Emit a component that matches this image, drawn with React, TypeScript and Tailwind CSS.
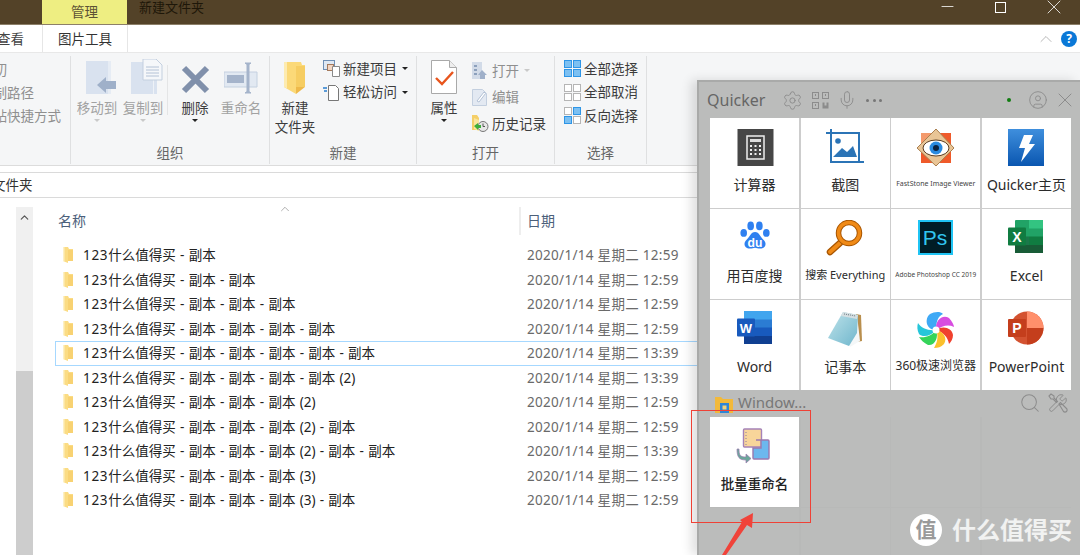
import type { ReactNode } from "react";
import { Settings, Mic, CircleUser, X, Search, Wrench, ChevronUp, Minus } from "lucide-react";

const rows = [
  { name: "什么值得买 - 副本", time: "12:59" },
  { name: "什么值得买 - 副本 - 副本", time: "12:59" },
  { name: "什么值得买 - 副本 - 副本 - 副本", time: "12:59" },
  { name: "什么值得买 - 副本 - 副本 - 副本 - 副本", time: "12:59" },
  { name: "什么值得买 - 副本 - 副本 - 副本 - 副本 - 副本", time: "13:39", selected: true },
  { name: "什么值得买 - 副本 - 副本 - 副本 - 副本 (2)", time: "13:39" },
  { name: "什么值得买 - 副本 - 副本 - 副本 (2)", time: "12:59" },
  { name: "什么值得买 - 副本 - 副本 - 副本 (2) - 副本", time: "12:59" },
  { name: "什么值得买 - 副本 - 副本 - 副本 (2) - 副本 - 副本", time: "13:39" },
  { name: "什么值得买 - 副本 - 副本 - 副本 (3)", time: "12:59" },
  { name: "什么值得买 - 副本 - 副本 - 副本 (3) - 副本", time: "12:59" },
];

function FolderSmall() {
  return (
    <svg width="13" height="16" viewBox="0 0 13 16" className="shrink-0">
      <path d="M1 0h5l1 2h4v12H6v2l-5-2z" fill="#fbdc84" />
      <path d="M1 0h1.500v14.500L1 14z" fill="#fdf0c4" />
      <path d="M6 3h5v11H6z" fill="#f8d272" />
    </svg>
  );
}

function MoveIcon() {
  return (
    <svg width="38" height="33" viewBox="-8 0 38 33">
      <path d="M0 0h25v33H0z" fill="#d9e2ef" />
      <path d="M22 0h3v33h-3z" fill="#e6ecf4" />
      <path d="M11 24l9-8v4h10v8H20v4z" fill="#9fb0c9" />
    </svg>
  );
}

function CopyIcon() {
  return (
    <svg width="39" height="35" viewBox="-7 0 39 35">
      <path d="M0 3h26v32H0z" fill="#d9e2ef" />
      <path d="M22 3h1v32h-1z" fill="#eef2f7" />
      <path d="M12 0h13l6 6v15H12z" fill="#f5f7fa" stroke="#c3cfdf" />
      <path d="M15 8h13M15 11h13M15 14h13M15 17h13" stroke="#b4c2d6" />
    </svg>
  );
}

function RenameIcon() {
  return (
    <svg width="34" height="32" viewBox="0 0 34 32">
      <path d="M0 10h33v15H0z" fill="#e2e9f2" stroke="#c4d0e0" />
      <path d="M3 13h17v8H3z" fill="#a5b4cb" />
      <path d="M21 1h6l-2 1.500v27l2 1.500h-6l2-1.500v-27z" fill="#a5b4cb" stroke="#a5b4cb" />
    </svg>
  );
}

function BigFolder() {
  return (
    <svg width="22" height="32" viewBox="0 0 22 32">
      <path d="M0 0h17l1 3h3v22h-9v7L0 25z" fill="#fbd978" />
      <path d="M0 0h3v26.500L0 25z" fill="#fdebb0" />
      <path d="M12 4h9v21h-9z" fill="#f6cd62" />
      <path d="M12 25h9l-9 7z" fill="#eeb94a" />
    </svg>
  );
}

function PropsIcon() {
  return (
    <svg width="26" height="34" viewBox="0 0 26 34">
      <path d="M.5.5h18l7 7v26H.5z" fill="#fff" stroke="#a9a9a9" />
      <path d="M18.500.5v7h7" fill="#eee" stroke="#a9a9a9" />
      <path d="M5 18l6 6 11-12" fill="none" stroke="#e8551d" strokeWidth="2.400" />
    </svg>
  );
}

function NewItemIcon() {
  return (
    <svg width="17" height="17" viewBox="0 0 17 17">
      <rect x=".5" y=".5" width="11" height="9" fill="#dfe8f3" stroke="#6f8fb5" />
      <rect x="4.500" y="4.500" width="6" height="6" fill="#f3d6c3" stroke="#a57a5d" />
      <path d="M9.500 6.500h7v10h-7z" fill="#fff" stroke="#8a8a8a" />
    </svg>
  );
}

function EasyAccessIcon() {
  return (
    <svg width="17" height="17" viewBox="0 0 17 17">
      <path d="M5.500 1.500h7l3 3v12h-10z" fill="#fff" stroke="#777" />
      <path d="M0 4h4M1 7h3" stroke="#2a7fd0" strokeWidth="1.300" />
    </svg>
  );
}

function OpenIcon() {
  return (
    <svg width="15" height="17" viewBox="0 0 15 17">
      <path d="M0 0h10v17H0z" fill="#d2dbe8" />
      <path d="M2 3h3v2H2zM2 7h3v2H2zM2 11h3v2H2z" fill="#8ca0bc" />
      <path d="M10 8l5 5h-2v4H8v-4H6z" fill="#9fb0c9" />
    </svg>
  );
}

function EditIcon() {
  return (
    <svg width="15" height="17" viewBox="0 0 15 17">
      <path d="M.5.5h10l4 4v12H.5z" fill="#e3e9f2" stroke="#c3cfdf" />
      <path d="M5 12l7-9 1.500 1.500L7 13z" fill="#fff" stroke="#b4c2d6" />
    </svg>
  );
}

function HistoryIcon() {
  return (
    <svg width="17" height="17" viewBox="0 0 17 17">
      <path d="M0 0h5l2 3v12H0z" fill="#f5cf68" />
      <path d="M2 3l5 2v11l-5-2z" fill="#fbe59c" />
      <circle cx="11" cy="11.500" r="5" fill="#e6e6e6" stroke="#777" />
      <path d="M11 8.500v3h2" fill="none" stroke="#555" />
      <path d="M2 11l4-3v2h3v3H6v2z" fill="#3fae3a" />
    </svg>
  );
}

function SelectIcon({ kind }: { kind: "all" | "none" | "invert" }) {
  const on = kind === "all" ? [1, 1, 1, 1] : kind === "none" ? [0, 0, 0, 0] : [0, 1, 1, 0];
  const spots = [
    [0, 0],
    [9, 0],
    [0, 9],
    [9, 9],
  ];
  return (
    <svg width="17" height="17" viewBox="0 0 17 17">
      {spots.map(([x, y], i) => (
        <rect
          key={i}
          x={x + 0.5}
          y={y + 0.5}
          width="7"
          height="7"
          fill={on[i] ? "#7cc0f2" : "#fff"}
          stroke={on[i] ? "#2e95e6" : "#b5b5b5"}
        />
      ))}
    </svg>
  );
}

function Caret({ light }: { light?: boolean }) {
  return (
    <span
      className={`inline-block h-0 w-0 border-x-[3.5px] border-t-[3.5px] border-x-transparent ${
        light ? "border-t-[#c9c9c9]" : "border-t-[#222]"
      }`}
    />
  );
}

function BigButton({
  icon,
  label,
  width,
  muted,
  caret,
}: {
  icon: ReactNode;
  label: ReactNode;
  width: number;
  muted?: boolean;
  caret?: "dark" | "light";
}) {
  return (
    <div className="flex flex-col items-center" style={{ width }}>
      <div className="flex h-[37px] items-end justify-center pb-[2px]">{icon}</div>
      <div className={`mt-[3px] text-center text-[13.5px] leading-[19px] ${muted ? "text-[#a2a2a2]" : "text-[#3c3c3c]"}`}>
        {label}
      </div>
      {caret && (
        <div className="-mt-[1px] flex h-[6px] items-center">
          <Caret light={caret === "light"} />
        </div>
      )}
    </div>
  );
}

function SmallRow({
  icon,
  label,
  muted,
  caret,
  tall,
}: {
  icon: ReactNode;
  label: string;
  muted?: boolean;
  caret?: "dark" | "light";
  tall?: boolean;
}) {
  return (
    <div className={`flex items-center ${tall ? "h-[26.500px]" : "h-[23.500px]"}`}>
      <div className="flex w-[20px] shrink-0 items-center">{icon}</div>
      <span className={`whitespace-nowrap text-[13.5px] ${muted ? "text-[#8f8f8f]" : "text-[#3c3c3c]"}`}>{label}</span>
      {caret && (
        <span className="ml-[5px] flex items-center">
          <Caret light={caret === "light"} />
        </span>
      )}
    </div>
  );
}

function Group({ width, label, children }: { width: number; label?: string; children: ReactNode }) {
  return (
    <div className="flex h-[108px] shrink-0 flex-col border-r border-[#dfe0e1]" style={{ width }}>
      <div className="h-[85px] flex-none">{children}</div>
      <div className="flex-1 text-center text-[13.5px] leading-[24px] text-[#666]">{label}</div>
    </div>
  );
}

function Ribbon() {
  return (
    <div className="flex h-[114px] border-y border-[#dcdcdc] border-t-[#e8e8e8] bg-[#f5f6f7] pt-[3px]">
      <Group width={71}>
        <div className="-ml-[20px] pt-[3px] text-[13.5px] text-[#8f8f8f]">
          <div className="flex h-[23px] items-center whitespace-nowrap">剪切</div>
          <div className="flex h-[23px] items-center whitespace-nowrap">复制路径</div>
          <div className="flex h-[23px] items-center whitespace-nowrap">粘贴快捷方式</div>
        </div>
      </Group>
      <Group width={199} label="组织">
        <div className="flex pl-[3px] pt-[3px]">
          <BigButton icon={<MoveIcon />} label="移动到" width={46} muted caret="light" />
          <BigButton icon={<CopyIcon />} label="复制到" width={46} muted caret="light" />
          <div className="ml-[1px] mr-[4px] mt-[6px] h-[50px] w-px bg-[#e4e5e6]" />
          <BigButton
            icon={
              <svg width="29" height="29" viewBox="0 0 29 29">
                <path d="M3 3l23 23M26 3L3 26" stroke="#8090ab" strokeWidth="6" />
              </svg>
            }
            label="删除"
            width={46}
            caret="dark"
          />
          <BigButton icon={<RenameIcon />} label="重命名" width={46} muted />
        </div>
      </Group>
      <Group width={147} label="新建">
        <div className="flex pl-[3px] pt-[1px]">
          <div className="pt-[2px]">
            <BigButton icon={<BigFolder />} label={<>新建<br />文件夹</>} width={44} />
          </div>
          <div className="ml-[6px]">
            <SmallRow icon={<NewItemIcon />} label="新建项目" caret="dark" />
            <SmallRow icon={<EasyAccessIcon />} label="轻松访问" caret="dark" />
          </div>
        </div>
      </Group>
      <Group width={138} label="打开">
        <div className="flex pl-[5px] pt-[1.500px]">
          <div className="pt-[1.500px]">
            <BigButton icon={<PropsIcon />} label="属性" width={44} caret="dark" />
          </div>
          <div className="ml-[6px]">
            <SmallRow icon={<OpenIcon />} label="打开" muted caret="light" tall />
            <SmallRow icon={<EditIcon />} label="编辑" muted tall />
            <SmallRow icon={<HistoryIcon />} label="历史记录" tall />
          </div>
        </div>
      </Group>
      <Group width={92} label="选择">
        <div className="pl-[9px] pt-[1px]">
          <SmallRow icon={<SelectIcon kind="all" />} label="全部选择" />
          <SmallRow icon={<SelectIcon kind="none" />} label="全部取消" />
          <SmallRow icon={<SelectIcon kind="invert" />} label="反向选择" />
        </div>
      </Group>
    </div>
  );
}

const Frame = ({ children }: { children: ReactNode }) => (
  <svg width="38" height="38" viewBox="0 0 38 38">
    {children}
  </svg>
);

const appIcons: Record<string, ReactNode> = {
  calc: (
    <Frame>
      <rect x="1.500" width="36" height="37" fill="#464646" />
      <rect x="11" y="7" width="17" height="23" fill="#464646" stroke="#eee" strokeWidth="1.500" />
      <rect x="14" y="10" width="11" height="3" fill="#ddd" />
      <path d="M14 17h2M18.500 17h2M23 17h2M14 21h2M18.500 21h2M23 21h2M14 25h2M18.500 25h2M23 25h2" stroke="#eee" strokeWidth="2" />
    </Frame>
  ),
  shot: (
    <Frame>
      <path d="M0 4h33v29M5 0v33h33" fill="none" stroke="#2b74b6" strokeWidth="2" />
      <path d="M7 28l9-9 5 4 6-6 4 11H7z" fill="#2b74b6" />
      <circle cx="12" cy="12" r="2.800" fill="#2b74b6" />
    </Frame>
  ),
  fast: (
    <Frame>
      <rect x="4" y="4" width="30" height="30" fill="#ef5a2a" />
      <rect x="4" y="4" width="15" height="15" fill="#f49a6c" />
      <path d="M19 0l18 19-18 18L0 19z" fill="#e9c596" stroke="#a97f50" />
      <ellipse cx="19" cy="19" rx="13" ry="8" fill="#fff" stroke="#5a3d22" />
      <circle cx="19" cy="19" r="6.500" fill="#2a8ae0" />
      <circle cx="19" cy="19" r="3" fill="#0d2340" />
    </Frame>
  ),
  quicker: (
    <Frame>
      <defs>
        <linearGradient id="qk" x1="0" y1="0" x2="0" y2="1">
          <stop offset="0" stopColor="#3f8fdd" />
          <stop offset="1" stopColor="#0a56b0" />
        </linearGradient>
      </defs>
      <rect x="1" width="36" height="37" fill="url(#qk)" />
      <path d="M17 6h9l-4 9h6L14 33l4-14h-6z" fill="#fff" />
    </Frame>
  ),
  baidu: (
    <Frame>
      <g transform="translate(2.500 -1) scale(.87)">
        <ellipse cx="6" cy="16" rx="3.800" ry="4.500" fill="#2f80f0" />
        <ellipse cx="14" cy="8" rx="3.800" ry="5" fill="#2f80f0" />
        <ellipse cx="24" cy="8" rx="3.800" ry="5" fill="#2f80f0" />
        <ellipse cx="32" cy="16" rx="3.800" ry="4.500" fill="#2f80f0" />
        <path d="M19 15c5 0 6 6 10 9 4 4 2 10-4 10-3 0-4-1-6-1s-3 1-6 1c-6 0-8-6-4-10 4-3 5-9 10-9z" fill="#2f80f0" />
        <text x="19" y="32" textAnchor="middle" fontSize="14" fontWeight="700" fill="#fff" fontFamily="'Liberation Sans',sans-serif">du</text>
      </g>
    </Frame>
  ),
  everything: (
    <Frame>
      <path d="M14 23L4 32" stroke="#a85500" strokeWidth="6.500" strokeLinecap="round" />
      <path d="M14 23L4 32" stroke="#f08a16" strokeWidth="4" strokeLinecap="round" />
      <circle cx="23" cy="13" r="10.500" fill="#fff" stroke="#a85500" strokeWidth="5.500" />
      <circle cx="23" cy="13" r="10.500" fill="none" stroke="#f08a16" strokeWidth="3.500" />
    </Frame>
  ),
  ps: (
    <Frame>
      <rect x="2" y="1" width="33" height="33" fill="#001d26" stroke="#1fc4f4" strokeWidth="2" />
      <text x="18" y="25" textAnchor="middle" fontSize="21" fill="#31c5f0" fontFamily="'Liberation Sans',sans-serif">Ps</text>
    </Frame>
  ),
  excel: (
    <Frame>
      <rect x="8" width="28" height="33" rx="1" fill="#21a366" />
      <rect x="22" width="14" height="8.500" fill="#33c481" />
      <rect x="22" y="16.500" width="14" height="8.500" fill="#107c41" />
      <rect x="8" y="16.500" width="14" height="8.500" fill="#185c37" opacity=".6" />
      <rect x="8" y="25" width="28" height="8" fill="#185c37" />
      <rect x="1" y="7.500" width="18" height="18" rx="1" fill="#107c41" />
      <text x="10" y="22" textAnchor="middle" fontSize="14" fontWeight="700" fill="#fff" fontFamily="'Liberation Sans',sans-serif">X</text>
    </Frame>
  ),
  word: (
    <Frame>
      <rect x="8" width="28" height="33" rx="1" fill="#2b7cd3" />
      <rect x="8" width="28" height="8.500" fill="#41a5ee" />
      <rect x="8" y="16.500" width="28" height="8.500" fill="#185abd" />
      <rect x="8" y="25" width="28" height="8" fill="#103f91" />
      <rect x="1" y="7.500" width="18" height="18" rx="1" fill="#185abd" />
      <text x="10" y="22" textAnchor="middle" fontSize="13" fontWeight="700" fill="#fff" fontFamily="'Liberation Sans',sans-serif">W</text>
    </Frame>
  ),
  notepad: (
    <Frame>
      <defs>
        <linearGradient id="np" x1="0" y1="0" x2="1" y2="1">
          <stop offset="0" stopColor="#bfe3ea" />
          <stop offset="1" stopColor="#6fb6cc" />
        </linearGradient>
      </defs>
      <path d="M30 3l5 1 1 26-5 1z" fill="#b98f4e" />
      <path d="M18 4h13l3 26-10 6z" fill="#f4f7f8" />
      <path d="M17 1l15 3-1 18-8 13L2 27z" fill="url(#np)" />
      <path d="M17 1l15 3-1 4-16-3z" fill="#d5dfe2" />
      <path d="M18 3l12 2" stroke="#7d8a90" strokeWidth="1.200" strokeDasharray="1 1" />
    </Frame>
  ),
  browser: (
    <Frame>
      <path d="M19 19C9 19 7 8 13 3c4-2 10-3 13 0-5 2-7 8-7 16z" fill="#3fa9f5" />
      <path d="M19 19c-1-9 6-16 13-12 3 3 5 7 5 9-6-3-12-1-18 3z" fill="#d84de0" />
      <path d="M19 19c7-5 16-2 17 5 0 4-2 7-4 9-1-7-6-12-13-14z" fill="#f0412e" />
      <path d="M19 19c7 1 12 8 8 14-3 3-6 4-10 4 3-5 5-11 2-18z" fill="#fbc02d" />
      <path d="M19 19c3 7-1 16-8 15-4-2-7-5-9-8 6 1 13-1 17-7z" fill="#35d45a" />
      <path d="M19 19c-5 6-13 8-17 4-2-4-2-8-1-11 3 5 10 8 18 7z" fill="#26c6da" />
      <circle cx="19" cy="19" r="3.500" fill="#fff" />
    </Frame>
  ),
  ppt: (
    <Frame>
      <circle cx="20" cy="17" r="16.500" fill="#d35230" />
      <path d="M20 .5a16.500 16.500 0 0 1 16.500 16.500H20z" fill="#ff8f6b" />
      <path d="M20 17h16.500A16.500 16.500 0 0 1 20 33.500z" fill="#c43e1c" />
      <rect x="1" y="8" width="18" height="18" rx="1" fill="#c43e1c" />
      <text x="10" y="22" textAnchor="middle" fontSize="14" fontWeight="700" fill="#fff" fontFamily="'Liberation Sans',sans-serif">P</text>
    </Frame>
  ),
};

const apps = [
  { icon: "calc", label: "计算器", size: "text-[14px]" },
  { icon: "shot", label: "截图", size: "text-[14px]" },
  { icon: "fast", label: "FastStone Image Viewer", size: "text-[7px] text-[#444]" },
  { icon: "quicker", label: "Quicker主页", size: "text-[14px]" },
  { icon: "baidu", label: "用百度搜", size: "text-[14px]" },
  { icon: "everything", label: "搜索 Everything", size: "text-[11px]" },
  { icon: "ps", label: "Adobe Photoshop CC 2019", size: "text-[6.500px] text-[#444]" },
  { icon: "excel", label: "Excel", size: "text-[14px]" },
  { icon: "word", label: "Word", size: "text-[14px]" },
  { icon: "notepad", label: "记事本", size: "text-[14px]" },
  { icon: "browser", label: "360极速浏览器", size: "text-[12px]" },
  { icon: "ppt", label: "PowerPoint", size: "text-[14px]" },
];

function AppCell({ icon, label, size }: { icon: ReactNode; label: string; size: string }) {
  return (
    <div className="flex flex-col items-center bg-white pt-[11px] text-[#2b2b2b]">
      <div className="h-[38px]">{icon}</div>
      <div className={`mt-[6px] flex h-[22px] items-center whitespace-nowrap ${size}`}>{label}</div>
    </div>
  );
}

function QrIcon() {
  return (
    <svg width="17" height="17" viewBox="0 0 17 17" fill="none" stroke="#8c8c8c">
      <rect x=".5" y=".5" width="6" height="6" />
      <rect x="10.500" y=".5" width="6" height="6" />
      <rect x=".5" y="10.500" width="6" height="6" />
      <path d="M3 3h1M13 3h1M3 13h1" strokeWidth="2" />
      <path d="M10.500 10.500h2v3h2v-3h2v6h-6z" fill="#8c8c8c" stroke="none" />
    </svg>
  );
}

function ToolsIcon() {
  return (
    <span className="relative block h-[20px] w-[20px]">
      <Wrench size={20} strokeWidth={1.200} className="absolute" />
      <svg width="20" height="20" viewBox="0 0 20 20" fill="none" stroke="currentColor" strokeWidth="1.100" className="absolute">
        <path d="M1 3l2-2 3 2v2l3.500 3.500-1 1L5 6H3zM11 11l1.500-1.500 6 6a1.500 1.500 0 0 1-3 3z" />
      </svg>
    </span>
  );
}

function QuickerPanel() {
  return (
    <div className="absolute bottom-0 left-[697px] right-0 top-[80px] border-l-2 border-t-2 border-[#a9aaa9] bg-[#bbbcbb] pl-[11px] shadow-[-6px_0_10px_rgba(0,0,0,0.12)]">
      <div className="flex h-[36px] items-center text-[#8c8c8c]">
        <span className="ml-[-3px] w-[75px] text-[16px] text-[#666]">Quicker</span>
        <Settings size={21} strokeWidth={1.100} />
        <span className="ml-[9px]">
          <QrIcon />
        </span>
        <Mic size={20} strokeWidth={1.100} className="ml-[8px]" />
        <span className="ml-[9px] flex gap-[3.500px]">
          <i className="block h-[3px] w-[3px] rounded-full bg-[#777]" />
          <i className="block h-[3px] w-[3px] rounded-full bg-[#777]" />
          <i className="block h-[3px] w-[3px] rounded-full bg-[#777]" />
        </span>
        <i className="ml-[125px] block h-[4px] w-[4px] rounded-full bg-[#107c10]" />
        <CircleUser size={20} strokeWidth={1.100} className="ml-[17px]" />
        <X size={24} strokeWidth={1} className="ml-[5px]" />
      </div>
      <div className="grid w-[361px] grid-cols-4 grid-rows-[repeat(3,89.500px)] gap-[1.500px] bg-[#cdcdcd]">
        {apps.map((a) => (
          <AppCell key={a.icon} icon={appIcons[a.icon]} label={a.label} size={a.size} />
        ))}
      </div>
      <div className="flex h-[27px] items-center text-[#8c8c8c]">
        <svg width="18" height="16" viewBox="0 0 18 16" className="ml-[5px] mt-[4px] shrink-0">
          <path d="M0 0h6l2 2h10v14H0z" fill="#f2b93a" />
          <rect x="5" y="6" width="9" height="10" fill="#2f86d6" />
          <rect x="7.500" y="8.500" width="4" height="4" fill="#f2d27a" />
        </svg>
        <span className="ml-[5px] -mt-[1px] text-[15px] text-[#777]">Window...</span>
        <Search size={22} strokeWidth={1.100} className="ml-[213px]" />
        <span className="ml-[7px]">
          <ToolsIcon />
        </span>
      </div>
      <div className="grid w-[361px] grid-cols-4 grid-rows-[repeat(2,90px)] gap-[1.500px] bg-[#b8b9b8]">
        <div className="flex flex-col items-center bg-white pt-[11px] text-[#222]">
          <svg width="38" height="38" viewBox="0 0 38 38">
            <rect x="7.500" y="1" width="18" height="18" rx="1" fill="#f8d59a" stroke="#a583b8" strokeWidth="1.400" />
            <path d="M10 4v13" stroke="#8a7aa0" strokeDasharray="1 2" />
            <path d="M20 12h12a1 1 0 0 1 1 1v17a1 1 0 0 1-1 1H18a1 1 0 0 1-1-1V20h8v-8z" fill="#6cb8ee" stroke="#9a78ae" strokeWidth="1.400" />
            <path d="M3 21c0 6 1 8 7 8v-3l5 4.500-5 4.500v-3c-7 0-9-3-9-11z" fill="#6aa89a" stroke="#9a78ae" strokeWidth=".7" />
          </svg>
          <div className="mt-[8px] flex h-[22px] items-center whitespace-nowrap text-[13.5px] font-medium">批量重命名</div>
        </div>
        {Array.from({ length: 7 }).map((_, i) => (
          <div key={i} className="bg-[#bbbcbb]" />
        ))}
      </div>
    </div>
  );
}

export default function App() {
  return (
    <div className="relative h-[555px] w-[1080px] overflow-hidden bg-white font-['Noto_Sans','Noto_Sans_CJK_SC',sans-serif] text-[13.5px]">
      {/* title bar */}
      <div className="flex h-[25px] border-b border-[#8c7f68] bg-[#534228]">
        <div className="ml-[42px] flex h-[24px] w-[85px] items-center justify-center bg-[#eeee82] text-[13.5px] text-[#5c5235]">
          管理
        </div>
        <div className="ml-[12px] mt-[1px] text-[13px] leading-[13px] text-[#1e1709]">新建文件夹</div>
        <div className="flex-1" />
        <Minus size={19} strokeWidth={1} className="-mt-[3px] mr-[38px] text-white" />
        <div className="mr-[36px] mt-[2px] h-[11px] w-[11px] border border-white" />
        <X size={24} strokeWidth={0.8} className="-mt-[5px] mr-[14px] text-white" />
      </div>
      {/* tabs */}
      <div className="flex h-[27px] items-center bg-white">
        <div className="ml-[-3px] w-[45px] pt-[2px] text-[#444]">查看</div>
        <div className="flex h-full w-[86px] items-center justify-center border-x border-[#e6e6e6] pt-[2px] text-[#333]">图片工具</div>
        <div className="flex-1" />
        <ChevronUp size={20} strokeWidth={1} className="mr-[5px] text-[#aaa]" />
        <div className="mr-[3px] flex h-[16px] w-[16px] items-center justify-center rounded-full bg-[#0a78d7] text-[12px] font-bold text-white">?</div>
      </div>
      <Ribbon />
      {/* address bar */}
      <div className="mt-[6px] flex h-[26px] items-center overflow-hidden border-y border-[#dadada] text-[#333]">
        <span className="-ml-[8px]">文件夹</span>
      </div>
      {/* list */}
      <div className="flex h-[357px]">
        <div className="ml-[16px] mt-[9px] flex h-[349px] w-[17px] shrink-0 flex-col bg-[#f0f0f0]">
          <ChevronUp size={13} strokeWidth={2.200} className="ml-[2px] mt-[4px] text-[#555]" />
          <div className="mt-[147px] flex-1 bg-[#cdcdcd]" />
        </div>
        <div className="ml-[22px] mt-[9px] flex-1">
          <div className="relative flex h-[28px] text-[14px] text-[#4c607a]">
            <span className="ml-[3px] w-[461px] leading-[28px]">名称</span>
            <ChevronUp size={14} strokeWidth={1} className="absolute left-[223px] top-[-5px] text-[#777]" />
            <span className="border-l-2 border-[#eeeeee] pl-[6px] leading-[28px]">日期</span>
          </div>
          <div className="mt-[8px]">
            {rows.map((r) => (
              <div
                key={r.name}
                className={`flex h-[24.500px] items-center whitespace-nowrap pl-[7px] ${
                  r.selected ? "shadow-[inset_0_0_0_1px_#a6d8ff]" : ""
                }`}
              >
                <FolderSmall />
                <span className="ml-[8px] w-[444px] text-[#222] [word-spacing:0.75px]">
                  <span className="tracking-[0.7px]">123</span>
                  {r.name}
                </span>
                <span className="tracking-[0.3px] text-[#6a6a6a]">2020/1/14 星期二 {r.time}</span>
              </div>
            ))}
          </div>
        </div>
      </div>
      <QuickerPanel />
      {/* annotation */}
      <div className="absolute left-[691px] top-[410px] h-[113px] w-[120px] border-[1.500px] border-[#ef4136]" />
      <svg width="50" height="45" viewBox="0 0 50 45" className="absolute left-[715px] top-[510px]">
        <path d="M38 3l-1 15-5-3-21 30H7l20-33-2-2z" fill="#f0433a" />
      </svg>
      {/* watermark */}
      <div className="absolute left-[910px] top-[512px] flex items-center text-white/80">
        <div className="flex h-[32px] w-[32px] items-center justify-center rounded-full bg-white text-[21px] font-bold text-[#9a9a9a]">值</div>
        <span className="ml-[10px] text-[24px] font-semibold">什么值得买</span>
      </div>
    </div>
  );
}
